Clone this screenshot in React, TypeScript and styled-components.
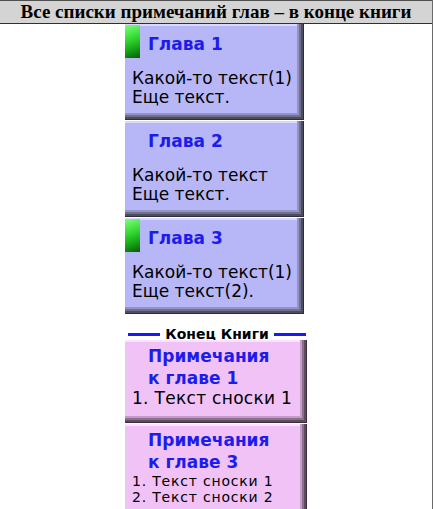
import React from "react"
import styled, { createGlobalStyle } from "styled-components"

const GlobalStyle = createGlobalStyle`
  html, body {
    margin: 0;
    padding: 0;
    background: #ffffff;
  }
`

const Page = styled.div`
  width: 432px;
  min-height: 509px;
  border-right: 1px solid #6a6a6a;
  background: #ffffff;
`

const Header = styled.header`
  height: 22px;
  border-top: 1px solid #505050;
  border-bottom: 1px solid #303030;
  background: #d4d4d4;
  display: flex;
  align-items: center;
  justify-content: center;
  font-family: "Liberation Serif", "Times New Roman", serif;
  font-weight: bold;
  font-size: 19px;
  color: #000;
`

const Column = styled.div`
  display: flex;
  flex-direction: column;
  align-items: flex-start;
  padding-left: 125px;
  width: 182px;
`

const bevels = {
  purple: {
    bg: "#b7b7f7",
    top: "#d9d9ff",
    shade: ["#2e2e3a", "#4c4c60", "#70708c", "#9494c4"],
  },
  pink: {
    bg: "#f0c2f6",
    top: "#fbe2ff",
    shade: ["#3a2e3a", "#5e4c5e", "#8c708e", "#c49ac8"],
  },
}

const Card = styled.section<{ $tone: "purple" | "pink"; $h: number; $w: number }>`
  box-sizing: border-box;
  width: ${(p) => p.$w}px;
  height: ${(p) => p.$h}px;
  margin-bottom: 1px;
  overflow: hidden;
  background: ${(p) => bevels[p.$tone].bg};
  box-shadow:
    inset -1px -1px 0 ${(p) => bevels[p.$tone].shade[0]},
    inset -3px -3px 0 ${(p) => bevels[p.$tone].shade[1]},
    inset -5px -5px 0 ${(p) => bevels[p.$tone].shade[2]},
    inset -7px -7px 0 ${(p) => bevels[p.$tone].shade[3]},
    inset 0 2px 0 ${(p) => bevels[p.$tone].top};
  font-family: "DejaVu Sans", Verdana, sans-serif;
`

const TitleRow = styled.div`
  display: flex;
  align-items: center;
  height: 40px;
`

const Tab = styled.span<{ $on: boolean }>`
  align-self: flex-start;
  margin-top: 1px;
  width: 15px;
  height: 33px;
  flex: none;
  background: ${(p) =>
    p.$on
      ? "linear-gradient(160deg, #7cff7c 0%, #2ed42e 45%, #139a13 75%, #0a5a0a 100%)"
      : "transparent"};
`

const ChapterTitle = styled.h2`
  margin: 0 0 0 8px;
  font-size: 17px;
  font-weight: bold;
  color: #1c1cec;
  line-height: 20px;
`

const Body = styled.div<{ $size?: number; $lh?: number; $ls?: number }>`
  padding-left: 7px;
  font-size: ${(p) => p.$size ?? 17}px;
  line-height: ${(p) => p.$lh ?? 19}px;
  letter-spacing: ${(p) => p.$ls ?? 0}px;
  color: #000;
  white-space: nowrap;
`

const ChapterBody = styled(Body)`
  margin-top: 5px;
`

const NotesTitle = styled.h3`
  margin: 5px 0 0 23px;
  font-size: 17px;
  font-weight: bold;
  color: #1c1cec;
  line-height: 22px;
`

const Divider = styled.div`
  display: flex;
  align-items: center;
  gap: 5px;
  width: 178px;
  height: 26px;
  padding: 0 0 0 3px;
  margin-top: -1px;
  font-family: "DejaVu Sans", Verdana, sans-serif;
  font-weight: bold;
  font-size: 14px;
  color: #000;
  &::before,
  &::after {
    content: "";
    flex: 1;
    height: 3px;
    margin-top: 15px;
    background: #1818ff;
  }
  span {
    margin-top: 13px;
  }
`

type Chapter = { title: string; lines: string[]; marked: boolean }

const chapters: Chapter[] = [
  { title: "Глава 1", lines: ["Какой-то текст(1)", "Еще текст."], marked: true },
  { title: "Глава 2", lines: ["Какой-то текст", "Еще текст."], marked: false },
  { title: "Глава 3", lines: ["Какой-то текст(1)", "Еще текст(2)."], marked: true },
]

type Notes = { chapter: string; items: string[]; size: number; lh: number; ls: number; h: number }

const notes: Notes[] = [
  { chapter: "к главе 1", items: ["1. Текст сноски 1"], size: 17, lh: 19, ls: 0.3, h: 83 },
  {
    chapter: "к главе 3",
    items: ["1. Текст сноски 1", "2. Текст сноски 2"],
    size: 14,
    lh: 16,
    ls: 0.8,
    h: 95,
  },
]

export default function App() {
  return (
    <>
      <GlobalStyle />
      <Page>
        <Header>Все списки примечаний глав – в конце книги</Header>
        <Column>
          {chapters.map((c) => (
            <Card key={c.title} $tone="purple" $h={96} $w={179}>
              <TitleRow>
                <Tab $on={c.marked} />
                <ChapterTitle>{c.title}</ChapterTitle>
              </TitleRow>
              <ChapterBody>
                {c.lines.map((l) => (
                  <div key={l}>{l}</div>
                ))}
              </ChapterBody>
            </Card>
          ))}
          <Divider>
            <span>Конец Книги</span>
          </Divider>
          {notes.map((n) => (
            <Card key={n.chapter} $tone="pink" $h={n.h} $w={182}>
              <NotesTitle>
                Примечания
                <br />
                {n.chapter}
              </NotesTitle>
              <Body $size={n.size} $lh={n.lh} $ls={n.ls}>
                {n.items.map((i) => (
                  <div key={i}>{i}</div>
                ))}
              </Body>
            </Card>
          ))}
        </Column>
      </Page>
    </>
  )
}
